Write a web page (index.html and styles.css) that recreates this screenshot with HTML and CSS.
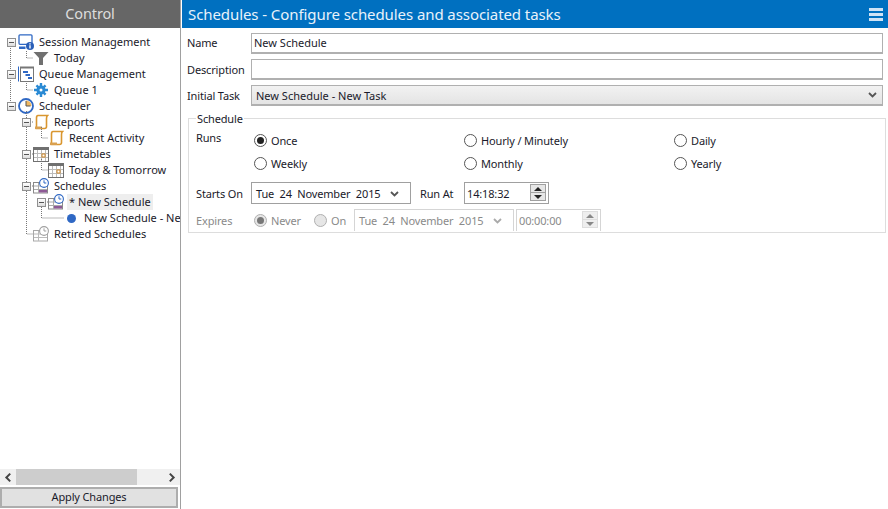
FILE: index.html
```html
<!DOCTYPE html>
<html lang="en">
<head>
  <meta charset="UTF-8">
  <title>Schedules</title>
  <link rel="stylesheet" href="styles.css">
</head>
<body>
  <svg class="defs" width="0" height="0">
    <symbol id="i-session" viewBox="0 0 16 16">
      <rect x="1" y="0.800" width="13" height="9.500" rx="1" fill="#fff" stroke="#2f68c4" stroke-width="1.300"/>
      <path d="M1 12.500h6.500v2.500H1z" fill="#2f68c4"/>
      <circle cx="12" cy="12" r="4" fill="#2a5fb8"/>
      <path d="M11.300 11.300h1.400v3.200h-1.400zM11.300 9.300h1.400v1.200h-1.400z" fill="#fff"/>
    </symbol>
    <symbol id="i-filter" viewBox="0 0 16 16">
      <path d="M0.500 2h15L10 8v7H6V8z" fill="#707070"/>
    </symbol>
    <symbol id="i-queue" viewBox="0 0 16 16">
      <rect x="2.500" y="1.500" width="13" height="14" fill="#fff" stroke="#777"/>
      <path d="M0.500 0.500v15" stroke="#2f68c4"/>
      <path d="M2 0.500h14v2H2z" fill="#777"/>
      <path d="M5 5h5v2H5zM7.500 8h4.500v2H7.500zM10 11h4v2h-4z" fill="#2f68c4"/>
    </symbol>
    <symbol id="i-gear" viewBox="0 0 16 16">
      <path d="M8 3.500a4.500 4.500 0 1 0 0 9 4.500 4.500 0 0 0 0-9zm0 3a1.500 1.500 0 1 1 0 3 1.500 1.500 0 0 1 0-3z" fill="#2a8ad4" fill-rule="evenodd"/>
      <path d="M6.800 1h2.400v3H6.800zM6.800 12h2.400v3H6.800zM1 6.800h3v2.400H1zM12 6.800h3v2.400h-3zM2.600 4.300l1.700-1.700 2 2-1.700 1.700zM9.700 11.400l1.700-1.700 2 2-1.700 1.700zM2.600 11.700l2-2 1.700 1.700-2 2zM9.700 4.600l2-2 1.700 1.700-2 2z" fill="#2a8ad4"/>
    </symbol>
    <symbol id="i-clock" viewBox="0 0 16 16">
      <circle cx="8" cy="8" r="7" fill="#fff" stroke="#2f68c4" stroke-width="1.800"/>
      <path d="M8 2.500V8h5.500A5.500 5.500 0 0 0 8 2.500z" fill="#f0b860"/>
      <path d="M8 3v5h4.500" fill="none" stroke="#555"/>
    </symbol>
    <symbol id="i-scroll" viewBox="0 0 16 16">
      <path d="M5 1.500h9.500c-.8.8-1 1.800-1 3v8c0 1.500-.8 2-2 2H2.500c.8 0 1-1 1-2V4c0-1.500.5-2.500 1.500-2.500z" fill="#fff" stroke="#d9962f" stroke-width="1.600"/>
      <path d="M2 12.500h7v2.500H2z" fill="#d9a050"/>
    </symbol>
    <symbol id="i-cal" viewBox="0 0 16 16">
      <rect x="0.500" y="1.500" width="15" height="14" fill="#fff" stroke="#707070"/>
      <path d="M0 1h16v3H0z" fill="#707070"/>
      <path d="M4.500 4v11M8.500 4v11M12.500 4v11M1 7.500h14M1 11.500h14" stroke="#bbb" fill="none"/>
      <rect x="9" y="8" width="3" height="3" fill="#fff" stroke="#d08a2c"/>
    </symbol>
    <symbol id="i-sched" viewBox="0 0 16 16">
      <rect x="0.500" y="4.500" width="14" height="10.500" fill="#fff" stroke="#8a8a8a"/>
      <path d="M1 8h13M1 11.500h13M5.500 5v10" stroke="#aaa" fill="none"/>
      <path d="M6 12h8v2.500H6z" fill="#8e5a96"/>
      <circle cx="11" cy="5" r="4.400" fill="#fff" stroke="#2f68c4" stroke-width="1.100"/>
      <path d="M11 2.300V5h2.300" fill="none" stroke="#2f68c4"/>
    </symbol>
    <symbol id="i-retired" viewBox="0 0 16 16">
      <rect x="0.500" y="4.500" width="14" height="10.500" fill="#fff" stroke="#a8a8a8"/>
      <path d="M1 8h13M1 11.500h13M5.500 5v10" stroke="#bbb" fill="none"/>
      <circle cx="11" cy="5" r="4.400" fill="#fff" stroke="#a0a0a0" stroke-width="1.100"/>
      <path d="M11 2.300V5h2.300" fill="none" stroke="#a0a0a0"/>
    </symbol>
    <symbol id="i-chev" viewBox="0 0 9 6">
      <path d="M1 1l3.500 3.500L8 1" fill="none" stroke="currentColor" stroke-width="1.800"/>
    </symbol>
  </svg>

  <div class="app">
    <aside class="side">
      <div class="side-title">Control</div>

      <div class="tree">
        <!-- dotted connector lines sit over the rows -->
        <svg class="tree-lines" width="180" height="250">
          <path transform="translate(0 -28)" d="M10.500 48V101M26.500 51V58H33M26.500 83V90H33M26.500 111V234H33M41.500 127V138H48M41.500 159V170H48M41.500 207V218H64M32 186H33M32 154H33M32 122H33M47 202H48" fill="none" stroke="#777" stroke-dasharray="1 1"/>
        </svg>

        <div class="row lvl-0"><span class="exp"></span><svg class="ico"><use href="#i-session"/></svg><span class="txt">Session Management</span></div>
        <div class="row lvl-1 leaf"><svg class="ico"><use href="#i-filter"/></svg><span class="txt">Today</span></div>
        <div class="row lvl-0"><span class="exp"></span><svg class="ico"><use href="#i-queue"/></svg><span class="txt">Queue Management</span></div>
        <div class="row lvl-1 leaf"><svg class="ico"><use href="#i-gear"/></svg><span class="txt">Queue 1</span></div>
        <div class="row lvl-0"><span class="exp"></span><svg class="ico"><use href="#i-clock"/></svg><span class="txt">Scheduler</span></div>
        <div class="row lvl-1"><span class="exp"></span><svg class="ico"><use href="#i-scroll"/></svg><span class="txt">Reports</span></div>
        <div class="row lvl-2 leaf"><svg class="ico"><use href="#i-scroll"/></svg><span class="txt">Recent Activity</span></div>
        <div class="row lvl-1"><span class="exp"></span><svg class="ico"><use href="#i-cal"/></svg><span class="txt">Timetables</span></div>
        <div class="row lvl-2 leaf"><svg class="ico"><use href="#i-cal"/></svg><span class="txt">Today &amp; Tomorrow</span></div>
        <div class="row lvl-1"><span class="exp"></span><svg class="ico"><use href="#i-sched"/></svg><span class="txt">Schedules</span></div>
        <div class="row lvl-2"><span class="exp"></span><svg class="ico"><use href="#i-sched"/></svg><span class="txt selected">* New Schedule</span></div>
        <div class="row lvl-3 leaf"><span class="dot"></span><span class="txt">New Schedule - New Task</span></div>
        <div class="row lvl-1 leaf"><svg class="ico"><use href="#i-retired"/></svg><span class="txt">Retired Schedules</span></div>
      </div>

      <div class="hscroll">
        <svg class="arrow left"><use href="#i-chev"/></svg>
        <div class="track"><div class="thumb"></div></div>
        <svg class="arrow right"><use href="#i-chev"/></svg>
      </div>
      <button class="apply">Apply Changes</button>
    </aside>

    <main class="main">
      <header class="main-title">
        <span>Schedules - Configure schedules and associated tasks</span>
        <span class="menu"><i></i><i></i><i></i></span>
      </header>

      <div class="form">
        <div class="field first"><label>Name</label><input class="text" type="text" value="New Schedule"></div>
        <div class="field"><label>Description</label><input class="text" type="text"></div>
        <div class="field">
          <label>Initial Task</label>
          <div class="select">New Schedule - New Task<svg class="chev"><use href="#i-chev"/></svg></div>
        </div>

        <fieldset class="group">
          <legend>Schedule</legend>
          <div class="runs">
            <span class="runs-label">Runs</span>
            <div class="radios">
              <label class="radio"><span class="mark on"></span>Once</label>
              <label class="radio"><span class="mark"></span>Hourly / Minutely</label>
              <label class="radio"><span class="mark"></span>Daily</label>
              <label class="radio"><span class="mark"></span>Weekly</label>
              <label class="radio"><span class="mark"></span>Monthly</label>
              <label class="radio"><span class="mark"></span>Yearly</label>
            </div>
          </div>

          <div class="when">
            <span class="when-label">Starts On</span>
            <div class="date">Tue&nbsp; 24&nbsp; November&nbsp; 2015<svg class="chev"><use href="#i-chev"/></svg></div>
            <span class="at-label">Run At</span>
            <div class="time">14:18:32<span class="spin"><b class="up"></b><b class="down"></b></span></div>
          </div>

          <div class="when expires">
            <span class="when-label">Expires</span>
            <label class="radio"><span class="mark on"></span>Never</label>
            <label class="radio"><span class="mark"></span>On</label>
            <div class="date">Tue&nbsp; 24&nbsp; November&nbsp; 2015<svg class="chev"><use href="#i-chev"/></svg></div>
            <div class="time">00:00:00<span class="spin"><b class="up"></b><b class="down"></b></span></div>
          </div>
        </fieldset>
      </div>
    </main>
  </div>
</body>
</html>
```

FILE: styles.css
```css
* {
  box-sizing: border-box;
}

html, body {
  margin: 0;
  height: 100%;
  overflow: hidden;
}

body {
  font-family: "Noto Sans", "Liberation Sans", sans-serif;
  font-size: 11px;
  letter-spacing: -0.15px;
  color: #1a1a2a;
  background: #fff;
}

.defs {
  position: absolute;
}

.app {
  display: flex;
  height: 509px;
}

/* left panel */
.side {
  width: 181px;
  flex: none;
  display: flex;
  flex-direction: column;
  margin-right: 1px;
  border-right: 1px solid #a0a0a0;
}

.side-title {
  height: 28px;
  flex: none;
  padding-bottom: 2px;
  background: #666;
  color: #ddd;
  font-size: 14.500px;
  line-height: 26px;
  text-align: center;
}

.tree {
  position: relative;
  flex: 1;
  padding-top: 6px;
  overflow: hidden;
  letter-spacing: 0;
}

.tree-lines {
  position: absolute;
  left: 0;
  top: 0;
  pointer-events: none;
}

.row {
  display: flex;
  align-items: center;
  height: 16px;
  white-space: nowrap;
}

.lvl-0 { padding-left: 7px; }
.lvl-1 { padding-left: 22px; }
.lvl-2 { padding-left: 37px; }
.lvl-3 { padding-left: 52px; }

.leaf.lvl-1 { padding-left: 33px; }
.leaf.lvl-2 { padding-left: 48px; }
.leaf.lvl-3 { padding-left: 67px; }

.exp {
  position: relative;
  width: 9px;
  height: 9px;
  flex: none;
  margin-right: 2px;
  border: 1px solid #909090;
  background: linear-gradient(#fff, #ddd);
}

.exp::after {
  content: "";
  position: absolute;
  left: 1px;
  top: 3px;
  width: 5px;
  height: 1px;
  background: #555;
}

.ico {
  width: 16px;
  height: 16px;
  flex: none;
}

.txt {
  margin-left: 5px;
  line-height: 16px;
}

.selected {
  margin-left: 3px;
  padding: 0 2px;
  background: #eee;
}

.dot {
  width: 9px;
  height: 9px;
  flex: none;
  margin-right: 8px;
  border-radius: 50%;
  background: #2f68c4;
}

/* long node name runs into the panel edge */
.dot + .txt {
  width: 96px;
  margin-left: 0;
  overflow: hidden;
}

.hscroll {
  display: flex;
  align-items: center;
  height: 16px;
  flex: none;
  background: #f0f0f0;
  color: #444;
}

.arrow {
  width: 10px;
  height: 7px;
  flex: none;
  margin: 0 3px;
}

.arrow.left {
  transform: rotate(90deg);
}

.arrow.right {
  transform: rotate(-90deg);
}

.track {
  flex: 1;
  height: 16px;
}

.thumb {
  width: 121px;
  height: 16px;
  background: #cdcdcd;
}

.apply {
  height: 21px;
  width: 178px;
  margin: 2px 0 1px;
  flex: none;
  padding: 0 0 2px;
  font: inherit;
  letter-spacing: inherit;
  color: inherit;
  background: #e1e1e1;
  border: 1px solid #adadad;
  outline: 1px solid #adadad;
  outline-offset: -2px;
}

/* right panel */
.main {
  flex: 1;
  min-width: 0;
}

.main-title {
  display: flex;
  align-items: center;
  justify-content: space-between;
  height: 28px;
  padding: 0 5px 1px 6px;
  background: #0070c0;
  color: #e8f2fa;
  font-size: 15px;
  letter-spacing: -0.08px;
}

.menu {
  display: flex;
  flex-direction: column;
  gap: 2px;
  width: 14px;
  margin-top: 2px;
}

.menu i {
  height: 3px;
  background: #cfe3f5;
}

.form {
  padding: 5px 2px 0 5px;
}

.field {
  display: flex;
  align-items: center;
  height: 21px;
  margin-bottom: 5px;
  padding-right: 3px;
}

.field label {
  width: 64px;
  flex: none;
}

.field.first label {
  margin-top: -2px;
}

.text, .select {
  flex: 1;
  height: 21px;
  padding: 0 4px;
  border: 2px solid #b0b0b0;
  border-width: 1px 1px 2px 1px;
  font: inherit;
  letter-spacing: 0;
  color: inherit;
  background: #fff;
  outline: none;
}

.text {
  padding: 0 2px 2px;
}

.select {
  position: relative;
  display: flex;
  align-items: center;
  background: linear-gradient(#f2f2f2, #e4e4e4);
}

.chev {
  position: absolute;
  right: 5px;
  top: 6px;
  width: 9px;
  height: 6px;
  color: #555;
}

.group {
  margin: 6px 0 0 1px;
  padding: 1px 0 0 7px;
  height: 121px;
  border: 1px solid #ddd;
}

.group legend {
  margin-left: 0;
  padding: 0 1px;
  line-height: 13px;
}

.runs {
  display: flex;
  height: 56px;
  padding-top: 4px;
}

.runs-label {
  width: 58px;
  flex: none;
}

.radios {
  display: grid;
  grid-template-columns: 210px 210px 1fr;
  grid-auto-rows: 23px;
  margin-top: -1px;
}

.radio {
  display: flex;
  align-items: center;
  gap: 4px;
}

.mark {
  position: relative;
  width: 13px;
  height: 13px;
  flex: none;
  border: 1px solid #555;
  border-radius: 50%;
  background: #fff;
}

.mark.on::after {
  content: "";
  position: absolute;
  left: 2px;
  top: 2px;
  width: 7px;
  height: 7px;
  border-radius: 50%;
  background: #222;
}

.when {
  display: flex;
  align-items: center;
  height: 22px;
}

.when-label {
  width: 55px;
  flex: none;
}

.date {
  position: relative;
  display: flex;
  align-items: center;
  width: 160px;
  height: 22px;
  padding-left: 4px;
  border: 1px solid #a0a0a0;
  white-space: nowrap;
}

.date .chev {
  right: 11px;
  top: 8px;
}

.at-label {
  width: 53px;
  padding-left: 9px;
  flex: none;
}

.time {
  position: relative;
  display: flex;
  align-items: center;
  width: 85px;
  height: 22px;
  padding-left: 2px;
  border: 1px solid #a0a0a0;
}

.spin {
  position: absolute;
  right: 2px;
  top: 1px;
  width: 16px;
  height: 17px;
  display: flex;
  flex-direction: column;
  border: 1px solid #a0a0a0;
  background: #e6e6e6;
}

.spin b {
  flex: 1;
  position: relative;
}

.spin b::after {
  content: "";
  position: absolute;
  left: 3px;
  top: 2px;
  border-left: 4px solid transparent;
  border-right: 4px solid transparent;
}

.spin .up {
  border-bottom: 1px solid #a0a0a0;
}

.spin .up::after {
  border-bottom: 4px solid #222;
}

.spin .down::after {
  border-top: 4px solid #222;
}

.expires {
  margin-top: 5px;
  color: #8a8a8a;
}

.expires .when-label {
  width: 58px;
}

.expires .radio:first-of-type {
  width: 60px;
}

.expires .radio + .radio {
  width: 40px;
}

.expires .mark {
  border-color: #b0b0b0;
  background: #e6e6e6;
}

.expires .mark.on::after {
  background: #777;
}

.expires .date {
  width: 160px;
  border-color: #d5d5d5;
  border-bottom: 0;
}

.expires .date .chev {
  color: #aaa;
}

.expires .time {
  width: 85px;
  margin-left: 2px;
  border: 1px solid #d5d5d5;
  border-bottom: 0;
}

.expires .spin {
  border-color: #ddd;
  background: #eee;
}

.expires .spin .up {
  border-bottom-color: #ddd;
}

.expires .spin .up::after {
  border-bottom-color: #888;
}

.expires .spin .down::after {
  border-top-color: #888;
}
```
